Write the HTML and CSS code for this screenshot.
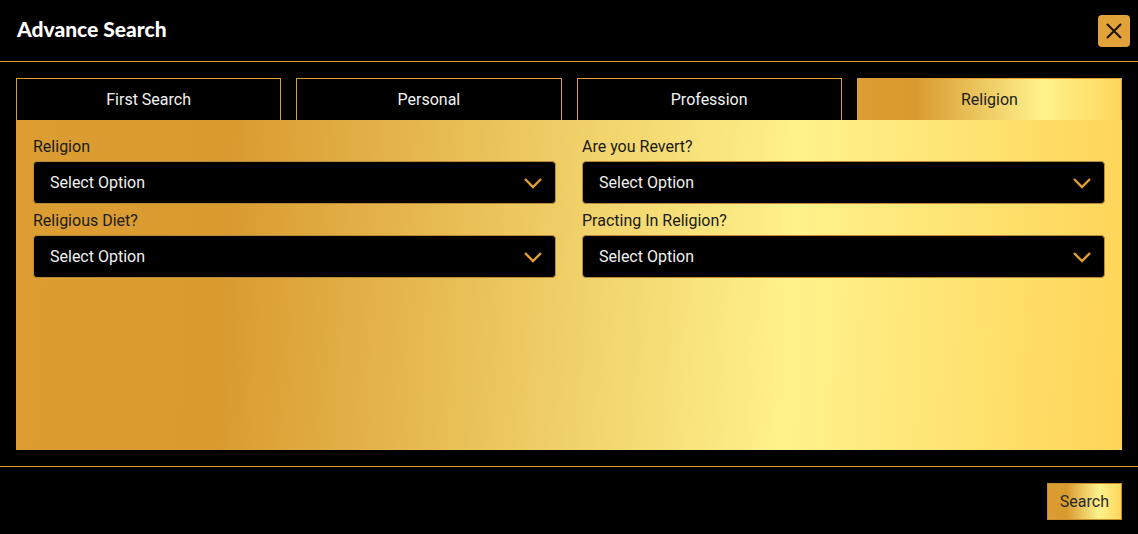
FILE: index.html
```html
<!DOCTYPE html>
<html lang="en">
<head>
<meta charset="UTF-8">
<meta name="viewport" content="width=device-width, initial-scale=1.0">
<title>Advance Search</title>
<link rel="stylesheet" href="styles.css">
</head>
<body>

<div class="modal">
  <div class="modal-header">
    <h2 class="modal-title">Advance Search</h2>
    <button class="close-btn" aria-label="Close">
      <svg width="18" height="18" viewBox="0 0 18 18">
        <path d="M2 2 L16 16 M16 2 L2 16" stroke="#1b1206" stroke-width="2" fill="none"/>
      </svg>
    </button>
  </div>

  <div class="modal-body">
    <div class="tabs">
      <div class="tab">First Search</div>
      <div class="tab">Personal</div>
      <div class="tab">Profession</div>
      <div class="tab active">Religion</div>
    </div>

    <div class="tab-panel">
      <div class="form-grid">
        <div class="field">
          <label>Religion</label>
          <div class="select-box">
            <span>Select Option</span>
            <svg class="chevron" width="20" height="12" viewBox="0 0 20 12"><path d="M2 2 L10 10 L18 2" stroke="#e09f2f" stroke-width="2.4" fill="none"/></svg>
          </div>
        </div>
        <div class="field">
          <label>Are you Revert?</label>
          <div class="select-box">
            <span>Select Option</span>
            <svg class="chevron" width="20" height="12" viewBox="0 0 20 12"><path d="M2 2 L10 10 L18 2" stroke="#e09f2f" stroke-width="2.4" fill="none"/></svg>
          </div>
        </div>
        <div class="field">
          <label>Religious Diet?</label>
          <div class="select-box">
            <span>Select Option</span>
            <svg class="chevron" width="20" height="12" viewBox="0 0 20 12"><path d="M2 2 L10 10 L18 2" stroke="#e09f2f" stroke-width="2.4" fill="none"/></svg>
          </div>
        </div>
        <div class="field">
          <label>Practing In Religion?</label>
          <div class="select-box">
            <span>Select Option</span>
            <svg class="chevron" width="20" height="12" viewBox="0 0 20 12"><path d="M2 2 L10 10 L18 2" stroke="#e09f2f" stroke-width="2.4" fill="none"/></svg>
          </div>
        </div>
      </div>
    </div>
  </div>

  <div class="modal-footer">
    <button class="search-btn">Search</button>
  </div>
</div>

</body>
</html>
```

FILE: styles.css
```css
body {
  margin: 0;
  padding: 0;
  background-color: #000;
  font-family: Roboto, "Liberation Sans", sans-serif;
  color: #fff;
}

.modal {
  width: 100%;
}

.modal-header {
  height: 61px;
  display: flex;
  align-items: center;
  justify-content: space-between;
  padding: 0 8px 0 17px;
  border-bottom: 1px solid #dca034;
}

.modal-title {
  margin: 0 0 4px 0;
  font-family: Lato, "Open Sans", sans-serif;
  font-weight: 900;
  font-size: 21px;
  letter-spacing: 0;
  color: #fff;
}

.close-btn {
  width: 32px;
  height: 32px;
  padding: 0;
  border: none;
  border-radius: 4px;
  background-color: #e2a23a;
  display: flex;
  align-items: center;
  justify-content: center;
}

.modal-body {
  padding: 16px;
}

.tabs {
  display: grid;
  grid-template-columns: repeat(4, 1fr);
  gap: 15px;
}

.tab {
  height: 41px;
  line-height: 41px;
  text-align: center;
  font-size: 16px;
  color: #f2f2f2;
  border: 1px solid #dca034;
  border-bottom: none;
  background-color: #000;
}

.tab.active {
  color: #1e1e1e;
  border-color: #dca034;
  background: linear-gradient(to right, #dc9e33 0%, #d99a30 22%, #fff28c 70%, #ffd75c 100%);
}

.tab-panel {
  height: 330px;
  box-sizing: border-box;
  padding: 17px 17px;
  background: linear-gradient(93deg, #dc9e33 0%, #d99a30 19%, #fff28c 70%, #ffd458 100%);
}

.form-grid {
  display: grid;
  grid-template-columns: 1fr 1fr;
  column-gap: 26px;
  row-gap: 7px;
}

.field label {
  display: block;
  font-size: 16px;
  line-height: 20px;
  margin-bottom: 4px;
  color: #1c1a16;
}

.select-box {
  height: 41px;
  display: flex;
  align-items: center;
  justify-content: space-between;
  padding: 0 12px 0 16px;
  background-color: #000;
  border: 1px solid #b98a3a;
  border-radius: 4px;
  font-size: 16px;
  color: #f0f0f0;
}

.chevron {
  margin-top: 1px;
}

.modal-footer {
  border-top: 1px solid #dca034;
  display: flex;
  justify-content: flex-end;
  padding: 16px;
}

.search-btn {
  height: 37px;
  padding: 0 12px;
  border: 1px solid #c98f2c;
  font-family: Roboto, "Liberation Sans", sans-serif;
  font-size: 16px;
  color: #2a2a2a;
  background: linear-gradient(to right, #dc9e33 0%, #d99a30 25%, #fff28c 70%, #ffd75c 100%);
}
```
